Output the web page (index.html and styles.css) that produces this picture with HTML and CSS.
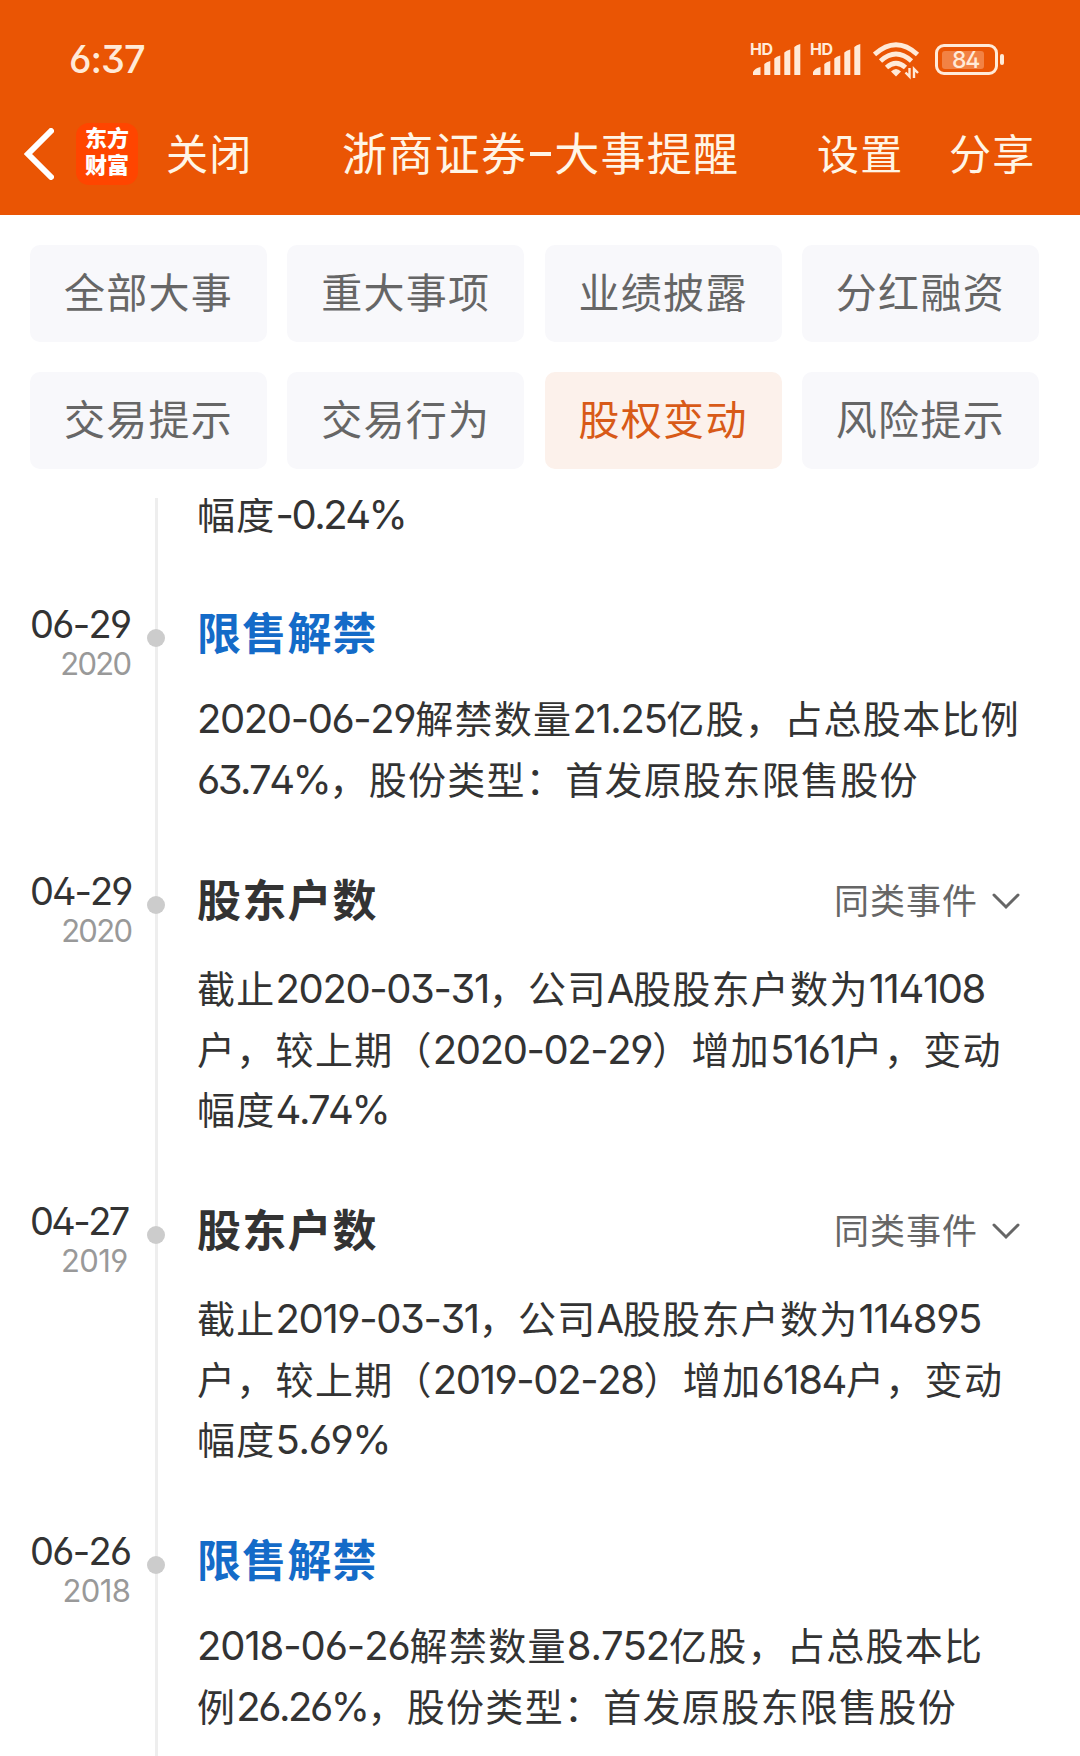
FILE: index.html
```html
<!DOCTYPE html>
<html lang="zh-CN">
<head>
    <meta charset="UTF-8">
    <meta name="viewport" content="width=device-width, initial-scale=1.0">
    <title>浙商证券-大事提醒</title>
    <link rel="stylesheet" href="styles.css">
</head>
<body>
    <header class="header">
        <div class="status">
            <span class="time">6:37</span>
            <svg class="signal" width="50" height="36" viewBox="0 0 50 36">
                <text x="-1" y="14" class="hd">HD</text>
                <path d="M2 34v-3q2-4 7.500-5v8zM13.300 34V23q2-2 6-3v14zM23.300 34V17.500q2-2 6-3v19.500zM33.300 34V11.500q2-2 6-3v25.500zM43.300 34V6q2-2 6-3v31z"/>
            </svg>
            <svg class="signal" width="50" height="36" viewBox="0 0 50 36">
                <text x="-1" y="14" class="hd">HD</text>
                <path d="M2 34v-3q2-4 7.500-5v8zM13.300 34V23q2-2 6-3v14zM23.300 34V17.500q2-2 6-3v19.500zM33.300 34V11.500q2-2 6-3v25.500zM43.300 34V6q2-2 6-3v31z"/>
            </svg>
            <svg class="wifi" width="48" height="38" viewBox="0 0 48 38">
                <g fill="none" stroke="#ffead8" stroke-width="4.800">
                    <path d="M1.500 12.500Q23 -7 44.500 12.500"/>
                    <path d="M7.500 19Q23 5 38.500 19"/>
                    <path d="M13.500 25.500Q23 17 32.500 25.500"/>
                </g>
                <path d="M18 29.500q5-5 10 0l-5 5z" fill="#ffead8"/>
                <path d="M32.500 30.500L36.500 34.500V26M41 36V27L45 31" fill="none" stroke="#ffead8" stroke-width="2.400"/>
            </svg>
            <span class="battery"><span class="level">84</span></span>
        </div>
        <nav class="navbar">
            <svg class="back" width="30" height="52" viewBox="0 0 30 52">
                <path d="M27 3L4 26L27 49" fill="none" stroke="#fff" stroke-width="6" stroke-linecap="round"/>
            </svg>
            <div class="logo">东方<br>财富</div>
            <span class="close">关闭</span>
            <h1 class="title">浙商证券<i class="dash"></i>大事提醒</h1>
            <span class="setting">设置</span>
            <span class="share">分享</span>
        </nav>
    </header>

    <div class="tabs">
        <div class="tab">全部大事</div>
        <div class="tab">重大事项</div>
        <div class="tab">业绩披露</div>
        <div class="tab">分红融资</div>
        <div class="tab">交易提示</div>
        <div class="tab">交易行为</div>
        <div class="tab active">股权变动</div>
        <div class="tab">风险提示</div>
    </div>

    <main class="timeline">
        <section class="event first">
            <div class="date"></div>
            <div class="content">
                <p>幅度<b class="pct">-0.24%</b></p>
            </div>
        </section>
        <section class="event two">
            <div class="date"><span class="day">06-29<small>2020</small></span></div>
            <div class="content">
                <div class="head"><h2 class="link">限售解禁</h2></div>
                <p><b>2020-06-29</b>解禁数量<b>21.25</b>亿股，占总股本比例<br><b class="pct">63.74%</b>，股份类型：首发原股东限售股份</p>
            </div>
        </section>
        <section class="event">
            <div class="date"><span class="day narrow">04-29<small>2020</small></span></div>
            <div class="content">
                <div class="head">
                    <h2>股东户数</h2>
                    <span class="more">同类事件<svg width="28" height="18" viewBox="0 0 28 18"><path d="M2 2L14 14L26 2"/></svg></span>
                </div>
                <p>截止<b>2020-03-31</b>，公司<b>A</b>股股东户数为<b>114108</b><br>户，较上期（<b>2020-02-29</b>）增加<b>5161</b>户，变动<br>幅度<b class="pct">4.74%</b></p>
            </div>
        </section>
        <section class="event">
            <div class="date"><span class="day narrower">04-27<small class="wide">2019</small></span></div>
            <div class="content">
                <div class="head">
                    <h2>股东户数</h2>
                    <span class="more">同类事件<svg width="28" height="18" viewBox="0 0 28 18"><path d="M2 2L14 14L26 2"/></svg></span>
                </div>
                <p>截止<b>2019-03-31</b>，公司<b>A</b>股股东户数为<b>114895</b><br>户，较上期（<b>2019-02-28</b>）增加<b>6184</b>户，变动<br>幅度<b>5.69%</b></p>
            </div>
        </section>
        <section class="event two">
            <div class="date"><span class="day">06-26<small class="wide">2018</small></span></div>
            <div class="content">
                <div class="head"><h2 class="link">限售解禁</h2></div>
                <p><b class="wide">2018-06-26</b>解禁数量<b class="wide">8.752</b>亿股，占总股本比<br>例<b class="pct">26.26%</b>，股份类型：首发原股东限售股份</p>
            </div>
        </section>
    </main>
</body>
</html>
```
FILE: styles.css
```css
* {
    box-sizing: border-box;
    margin: 0;
    padding: 0;
}
body {
    width: 1080px;
    height: 1756px;
    overflow: hidden;
    display: flex;
    flex-direction: column;
    background: #fff;
    color: #333;
    font-family: Inter, "Noto Sans CJK SC", sans-serif;
    font-feature-settings: "ss01";
    font-kerning: none;
}
.header {
    height: 215px;
    flex: none;
    background: #ea5504;
    color: #fff5e6;
}
.status {
    display: flex;
    align-items: center;
    height: 92px;
    padding: 26px 82px 0 69px;
    color: #ffead8;
}
.time {
    font-size: 38px;
    font-weight: 500;
    letter-spacing: -1px;
    margin-right: auto;
}
.signal {
    fill: #ffead8;
    margin-right: 10px;
    overflow: visible;
}
.hd {
    font-size: 16px;
    font-weight: 700;
    letter-spacing: -0.5px;
}
.wifi {
    margin: 4px 14px 0 2px;
}
.battery {
    position: relative;
    width: 63px;
    height: 31px;
    padding: 4px;
    border: 3px solid #ffead8;
    border-radius: 9px;
}
.battery::after {
    content: "";
    position: absolute;
    right: -9px;
    top: 7px;
    width: 4px;
    height: 11px;
    border-radius: 2px;
    background: #ffead8;
}
.level {
    display: block;
    width: 42px;
    height: 18px;
    padding-left: 10px;
    border-radius: 3px;
    background: #f28244;
    font-size: 23px;
    font-weight: 500;
    letter-spacing: -1.2px;
    line-height: 18px;
}
.navbar {
    display: flex;
    align-items: center;
    height: 123px;
    padding-left: 24px;
    font-size: 42px;
    letter-spacing: 1.3px;
    white-space: nowrap;
}
.logo {
    width: 62px;
    height: 62px;
    margin: 0 28px 0 22px;
    padding-top: 2px;
    border-radius: 13px;
    background: #ff4500;
    color: #fff;
    font-size: 22px;
    font-weight: 900;
    letter-spacing: 0;
    line-height: 27px;
    text-align: center;
}
.close,
.title,
.setting,
.share {
    padding-bottom: 5px;
}
.close {
    width: 176px;
}
.title {
    display: flex;
    align-items: center;
    width: 475px;
    font-size: 45px;
    font-weight: 400;
}
.dash {
    width: 21px;
    height: 4px;
    margin: 5px 3px 0;
    background: #fff5e6;
}
.setting {
    width: 132px;
}
.tabs {
    display: grid;
    grid-template-columns: repeat(4, 237px);
    align-content: start;
    gap: 30px 20.3px;
    height: 283px;
    flex: none;
    padding: 30px 30px 0;
}
.tab {
    height: 97px;
    border-radius: 10px;
    background: #f8f8fb;
    color: #666;
    font-size: 41px;
    letter-spacing: 1.3px;
    line-height: 96px;
    text-align: center;
}
.active {
    background: #fcf1eb;
    color: #d85a18;
}
.timeline {
    flex: 1;
    overflow: hidden;
}
.event {
    display: flex;
    height: 330px;
}
.event.first {
    height: 103px;
}
.event.two {
    height: 267px;
}
.date {
    position: relative;
    width: 158px;
    padding-left: 30px;
    border-right: 3px solid #eee;
    font-size: 38px;
    line-height: 46px;
}
.day {
    display: inline-block;
    letter-spacing: -1.7px;
    text-align: right;
}
.narrow {
    letter-spacing: -2px;
}
.narrower {
    letter-spacing: -2.6px;
}
.date small {
    display: block;
    color: #999;
    font-size: 31px;
    letter-spacing: -1.7px;
    line-height: 34px;
}
.date small.wide {
    letter-spacing: -0.6px;
}
.event:not(.first) .date::after {
    content: "";
    position: absolute;
    top: 28px;
    right: -10px;
    width: 18px;
    height: 18px;
    border-radius: 50%;
    background: #ccc;
}
.content {
    flex: 1;
    padding-left: 39px;
}
.head {
    display: flex;
    align-items: center;
    height: 60px;
    padding-right: 60px;
}
h2 {
    font-size: 44px;
    font-weight: 700;
    letter-spacing: 1.2px;
}
.link {
    padding-bottom: 1px;
    color: #146bc8;
}
.more {
    display: flex;
    align-items: center;
    margin-left: auto;
    padding-top: 1px;
    color: #666;
    font-size: 35px;
    letter-spacing: 1px;
}
.more svg {
    margin: 7px 0 0 14px;
    fill: none;
    stroke: #666;
    stroke-width: 3;
    stroke-linecap: round;
}
p {
    margin-top: 31px;
    font-size: 38px;
    letter-spacing: 1.3px;
    line-height: 60.5px;
    white-space: nowrap;
}
.first p {
    margin-top: -13px;
}
.two p {
    margin-top: 28px;
}
p b {
    font-size: 40px;
    font-weight: 400;
    letter-spacing: -1.4px;
    line-height: 1;
}
p .pct {
    letter-spacing: -2.5px;
}
p .wide {
    letter-spacing: -1.1px;
}
```
